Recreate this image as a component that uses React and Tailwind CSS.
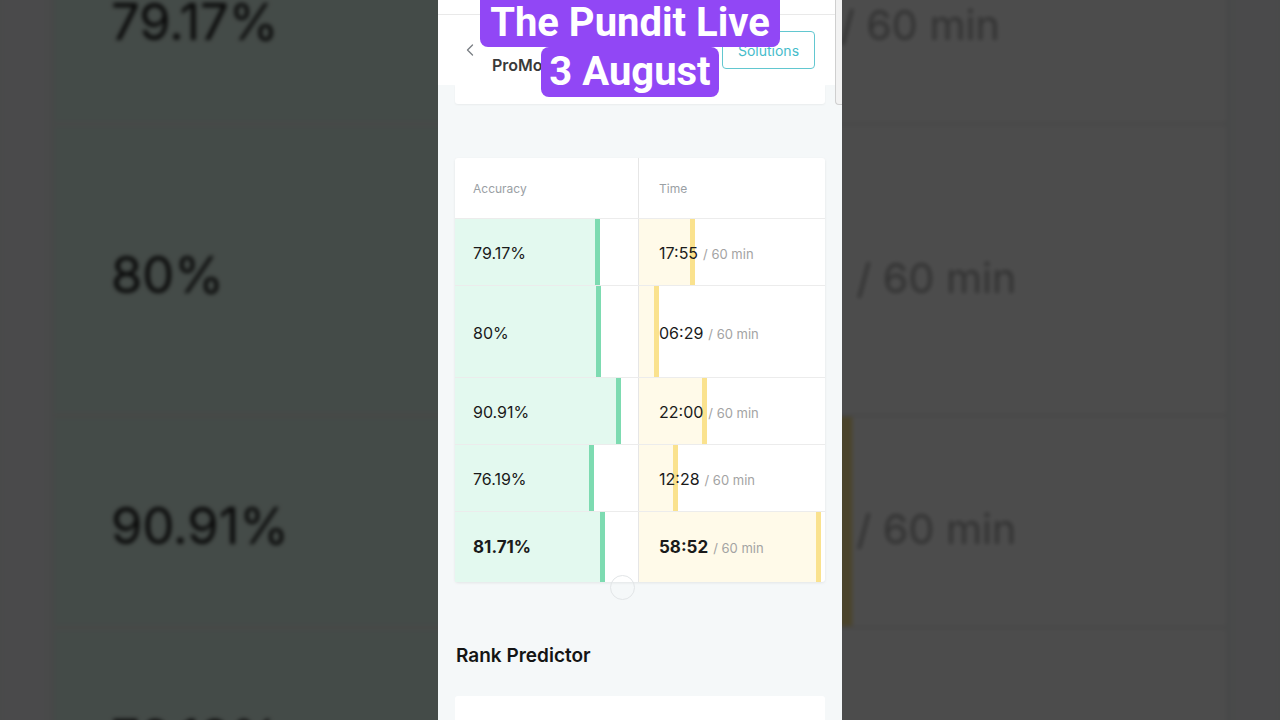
import React from "react";
import { ChevronLeft } from "lucide-react";

const rows = [
  { acc: "79.17%", accPct: 79.17, time: "17:55", timePct: 29.86, h: "h-[66px]" },
  { acc: "80%", accPct: 80, time: "06:29", timePct: 10.81, h: "h-[91px]" },
  { acc: "90.91%", accPct: 90.91, time: "22:00", timePct: 36.67, h: "h-[66px]" },
  { acc: "76.19%", accPct: 76.19, time: "12:28", timePct: 20.78, h: "h-[66px]" },
  { acc: "81.71%", accPct: 81.71, time: "58:52", timePct: 98.11, h: "h-[70px]", total: true },
];

function PhoneScreen() {
  return (
    <div className="relative w-[404px] h-[720px] overflow-hidden bg-[#f5f8f9] font-['Inter',sans-serif] text-[#1a1a1a]">
      {/* status strip + sticky header */}
      <div className="h-[15px] bg-white border-b border-[#e9e9e9]" />
      <div className="flex items-center h-[70px] bg-white pl-[22px] pr-[27px]">
        <ChevronLeft size={20} strokeWidth={1.6} className="text-[#7a7f84]" />
        <span className="ml-[12px] mt-[30px] text-[16px] font-semibold text-[#3a3a3a] whitespace-nowrap">ProMock Test</span>
        <button className="ml-auto w-[93px] h-[38px] rounded-[4px] border-[1.5px] border-[#62c7d0] text-[14px] text-[#45bccb]">
          Solutions
        </button>
      </div>
      <div className="mx-[17px] h-[19px] bg-white rounded-b-[3px] shadow-[0_1px_2px_rgba(0,0,0,0.05)]" />

      {/* results table */}
      <div className="mx-[17px] mt-[54px] bg-white rounded-[3px] shadow-[0_1px_3px_rgba(0,0,0,0.08)]">
        <div className="flex h-[61px] border-b border-[#ececec] text-[12px] text-[#9aa0a4]">
          <div className="w-[183px] flex items-center pl-[18px] pt-[2px]">Accuracy</div>
          <div className="flex-1 flex items-center pl-[20px] pt-[2px] border-l border-[#e6e6e6]">Time</div>
        </div>
        {rows.map((r, i) => (
          <div key={i} className={`flex ${r.h} ${i < rows.length - 1 ? "border-b border-[#ececec] box-content" : ""}`}>
            <div className="relative w-[183px] flex items-center pl-[18px] pt-[2px]">
              <div
                className="absolute left-0 top-0 bottom-0 bg-[#e3f9ef] border-r-[5px] border-[#7ddbb1]"
                style={{ width: r.accPct + "%" }}
              />
              <span className={`relative ${r.total ? "text-[17px] font-bold" : "text-[16px]"}`}>{r.acc}</span>
            </div>
            <div className="relative flex-1 flex items-center pl-[20px] pt-[2px] border-l border-[#e6e6e6]">
              <div
                className="absolute left-0 top-0 bottom-0 bg-[#fffae9] border-r-[5px] border-[#fae28e]"
                style={{ width: r.timePct + "%" }}
              />
              <span className="relative flex items-baseline">
                <span className={r.total ? "text-[17px] font-bold" : "text-[16px]"}>{r.time}</span>
                <span className="ml-[5px] text-[13px] text-[#a3a3a3]">/ 60 min</span>
              </span>
            </div>
          </div>
        ))}
      </div>

      <h2 className="mt-[60px] ml-[18px] text-[19px] font-semibold text-[#141414]">Rank Predictor</h2>
      <div className="mx-[17px] mt-[25px] h-[60px] bg-white rounded-[3px]" />

      {/* touch ring */}
      <div className="absolute left-[172px] top-[575px] w-[25px] h-[25px] rounded-full border border-[#e2e5e7]" />
      {/* scrollbar stub */}
      <div className="absolute right-0 top-0 w-[7px] h-[105px] bg-[#f2f2f2] border-l border-b border-[#cfcfcf] rounded-bl-[4px]" />
    </div>
  );
}

export default function App() {
  return (
    <div className="relative w-[1280px] h-[720px] overflow-hidden bg-[#4a4a4a]">
      <div className="absolute inset-0 flex justify-center">
        <div className="scale-[3.168] blur-[0.6px] brightness-[0.3]">
          <PhoneScreen />
        </div>
      </div>

      <div className="relative flex justify-center">
        <PhoneScreen />
      </div>

      <div className="absolute top-0 left-0 w-full flex flex-col items-center font-['Roboto',sans-serif] font-bold text-white">
        <div className="relative -translate-x-[10px] px-[10px] h-[47px] flex items-end pb-[4px] bg-[#9147f5] rounded-b-[8px] text-[40px] leading-none">
          The Pundit Live
        </div>
        <div className="relative -translate-x-[10px] px-[8px] h-[50px] flex items-center bg-[#9147f5] rounded-[8px] text-[40px] leading-none">
          3 August
        </div>
      </div>
    </div>
  );
}
